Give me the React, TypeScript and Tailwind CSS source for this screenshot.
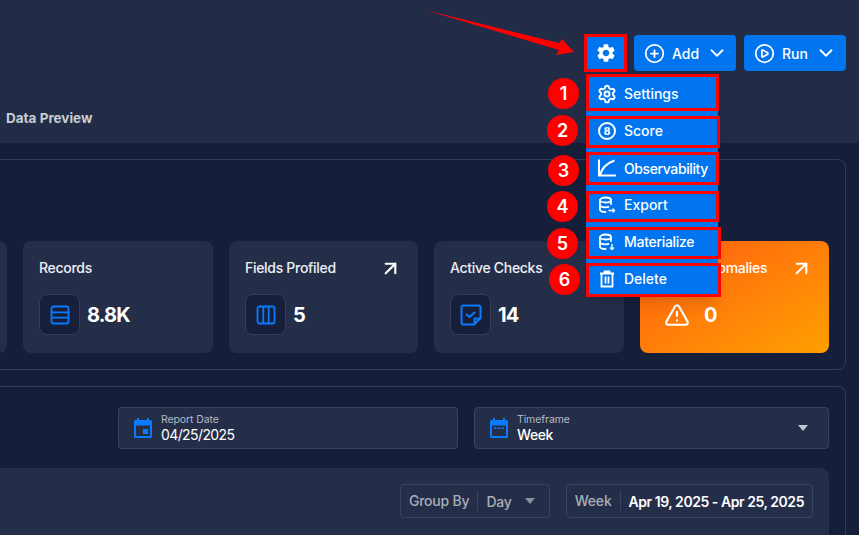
import { ArrowUpRight, ChevronDown, CirclePlay, CirclePlus, Settings, TriangleAlert } from 'lucide-react';

const menuItems = [
  { n: 1, label: 'Settings', icon: 'settings', box: 'mt-0 h-[37px] w-[133px] pt-[2px]', badge: '-left-[41px] top-[1px]', text: '' },
  { n: 2, label: 'Score', icon: 'score', box: 'mt-[5px] h-[32px] w-[134px] pb-[3px]', badge: '-left-[42px] top-[-4px]', text: '' },
  { n: 3, label: 'Observability', icon: 'chart', box: 'mt-[4px] h-[33px] w-[133px] pb-[1px]', badge: '-left-[41px] top-0', text: 'tracking-[-0.4px]' },
  { n: 4, label: 'Export', icon: 'export', box: 'mt-[6px] h-[31px] w-[133px] pb-[4px]', badge: '-left-[42px] top-[-3px]', text: '' },
  { n: 5, label: 'Materialize', icon: 'materialize', box: 'mt-[5px] h-[32px] w-[135px] pb-[3px]', badge: '-left-[42px] top-[-2px]', text: 'tracking-[-0.3px]' },
  { n: 6, label: 'Delete', icon: 'delete', box: 'mt-[4px] h-[34px] w-[135px] pb-[3px]', badge: '-left-[40px] top-[-2px]', text: '' },
];

function GearFilled() {
  return (
    <svg viewBox="0 0 24 24" className="h-[22px] w-[22px] fill-white">
      <path d="M19.14 12.94c.04-.3.06-.61.06-.94 0-.32-.02-.64-.07-.94l2.03-1.58c.18-.14.23-.41.12-.61l-1.92-3.32c-.12-.22-.37-.29-.59-.22l-2.39.96c-.5-.38-1.03-.7-1.62-.94l-.36-2.54c-.04-.24-.24-.41-.48-.41h-3.84c-.24 0-.43.17-.47.41l-.36 2.54c-.59.24-1.13.57-1.62.94l-2.39-.96c-.22-.08-.47 0-.59.22L2.74 8.87c-.12.21-.08.47.12.61l2.03 1.58c-.05.3-.09.63-.09.94s.02.64.07.94l-2.03 1.58c-.18.14-.23.41-.12.61l1.92 3.32c.12.22.37.29.59.22l2.39-.96c.5.38 1.03.7 1.62.94l.36 2.54c.05.24.24.41.48.41h3.84c.24 0 .44-.17.47-.41l.36-2.54c.59-.24 1.13-.56 1.62-.94l2.39.96c.22.08.47 0 .59-.22l1.92-3.32c.12-.22.07-.47-.12-.61l-2.01-1.58zM12 15.6c-1.98 0-3.6-1.62-3.6-3.6s1.62-3.6 3.6-3.6 3.6 1.62 3.6 3.6-1.62 3.6-3.6 3.6z" />
    </svg>
  );
}

function Db({ mark }: { mark: 'right' | 'down' }) {
  return (
    <svg viewBox="0 0 18 18" fill="none" stroke="white" strokeWidth="1.8" strokeLinecap="round" className="h-[18px] w-[18px]">
      <ellipse cx="7.500" cy="4" rx="5.500" ry="2.500" />
      <path d="M2 4v9.500C2 15 4.500 16 7.500 16M13 4v4M2 8.800c0 1.500 2.500 2.500 5.500 2.500 1 0 2-.1 3-.4" />
      {mark === 'right' ? (
        <path d="M11 14.500h5.500M15 13l1.500 1.500L15 16" strokeWidth="1.400" />
      ) : (
        <path d="M14 11.500v5M12.500 15l1.500 1.500 1.500-1.500" strokeWidth="1.400" />
      )}
    </svg>
  );
}

function MenuIcon({ name }: { name: string }) {
  if (name === 'settings') return <Settings size={20} color="white" strokeWidth={2.3} className="-mx-px" />;
  if (name === 'score')
    return (
      <span className="flex h-[18px] w-[18px] items-center justify-center rounded-full border-2 border-white text-[10px] font-extrabold leading-none text-white">
        8
      </span>
    );
  if (name === 'chart')
    return (
      <svg viewBox="0 0 18 18" fill="none" stroke="white" strokeWidth="2" className="h-[18px] w-[18px] shrink-0">
        <path d="M1 .500V16.500H18M2 16.500C3.500 10 8 4.500 16.500 1.500" />
      </svg>
    );
  if (name === 'export') return <Db mark="right" />;
  if (name === 'materialize') return <Db mark="down" />;
  return (
    <svg viewBox="0 0 18 18" fill="none" stroke="white" strokeWidth="1.800" className="h-[18px] w-[18px]">
      <path d="M2 3.500h14M6.500 3V1.500h5V3M3.500 3.500V16.500h11V3.500M7.500 6.500v7M10.500 6.500v7" />
    </svg>
  );
}

function Calendar({ dots }: { dots?: boolean }) {
  return (
    <svg viewBox="0 0 22 22" className="h-[22px] w-[22px] fill-[#0a7bff]">
      <path fillRule="evenodd" d="M5 1h2v2h8V1h2v2h1.500A1.500 1.500 0 0 1 20 4.500v15a1.500 1.500 0 0 1-1.500 1.500h-15A1.500 1.500 0 0 1 2 19.500v-15A1.500 1.500 0 0 1 3.500 3H5zM4 8.500V19h14V8.500z" />
      {dots ? <path d="M6 10.500h2.500v1.500H6zM9.800 10.500h2.500v1.500H9.800zM13.500 10.500H16v1.500h-2.500z" /> : <path d="M11 12h5v5h-5z" />}
    </svg>
  );
}

function StatCard({ title, value, arrow, width, children }: { title: string; value: string; arrow?: boolean; width: string; children: React.ReactNode }) {
  return (
    <div className={`h-[112px] shrink-0 rounded-lg bg-[#252e49] px-4 pt-[17px] ${width}`}>
      <div className="flex h-[19px] items-center justify-between text-[14px] font-medium tracking-[-0.3px] text-[#eef0f5]">
        <span>{title}</span>
        {arrow && <ArrowUpRight size={23} color="white" strokeWidth={2.2} className="translate-y-px" />}
      </div>
      <div className="mt-[17px] flex items-center gap-[7px]">
        <div className="flex h-[41px] w-[41px] items-center justify-center rounded-lg border border-[#333c58] bg-[#171f3a]">
          {children}
        </div>
        <span className="text-[20px] font-bold tracking-[-0.8px] text-white">{value}</span>
      </div>
    </div>
  );
}

export default function App() {
  return (
    <div className="relative h-[535px] w-[859px] overflow-hidden bg-[#161f3a] font-['Inter',sans-serif]">
      {/* Header */}
      <header className="flex h-[143px] flex-col bg-[#232c47] pl-[6px] pr-[13px]">
        <div className="mt-[34px] flex items-start justify-end gap-2">
          <button className="-mr-px flex h-[38px] w-[43px] items-center justify-center border-[3px] border-[#f00] bg-[#0075ef]">
            <GearFilled />
          </button>
          <button className="mt-px flex h-[36px] w-[102px] items-center gap-[7px] rounded bg-[#0075ef] pl-[10px] text-[14px] font-medium text-white">
            <CirclePlus size={21} strokeWidth={2} />
            <span>Add</span>
            <ChevronDown size={22} strokeWidth={2} />
          </button>
          <button className="mt-px flex h-[36px] w-[102px] items-center gap-[7px] rounded bg-[#0075ef] pl-[10px] text-[14px] font-medium text-white">
            <CirclePlay size={21} strokeWidth={2} />
            <span>Run</span>
            <ChevronDown size={22} strokeWidth={2} />
          </button>
        </div>
        <div className="mt-[36px] text-[13.500px] font-bold text-[#c9ccd4]">Data Preview</div>
      </header>

      {/* Totals panel */}
      <section className="-ml-[20px] mr-[13px] mt-4 h-[211px] rounded-lg border border-[#333c58] pt-[81px]">
        <div className="-ml-[164px] flex gap-4">
          <div className="h-[112px] w-[190px] shrink-0 rounded-lg bg-[#252e49]" />
          <StatCard title="Records" value="8.8K" width="w-[190px]">
            <svg viewBox="0 0 20 20" fill="none" stroke="#0a7bff" strokeWidth="1.800" className="h-[20px] w-[20px]">
              <rect x="1.500" y="1.500" width="17" height="17" rx="2" />
              <path d="M1.500 7.300h17M1.500 12.700h17" />
            </svg>
          </StatCard>
          <StatCard title="Fields Profiled" value="5" arrow width="w-[189px]">
            <svg viewBox="0 0 20 20" fill="none" stroke="#0a7bff" strokeWidth="1.800" className="h-[20px] w-[20px]">
              <rect x="1.500" y="1.500" width="17" height="17" rx="2" />
              <path d="M7.300 1.500v17M12.700 1.500v17" />
            </svg>
          </StatCard>
          <StatCard title="Active Checks" value="14" width="w-[190px]">
            <svg viewBox="0 0 22 22" fill="none" stroke="#0a7bff" strokeWidth="2" strokeLinejoin="round" strokeLinecap="round" className="h-[22px] w-[22px]">
              <path d="M3.500 1.500h15a2 2 0 0 1 2 2V14l-6.500 6.500H3.500a2 2 0 0 1-2-2v-15a2 2 0 0 1 2-2z" />
              <path d="M6.500 10.500l3 2.500 5-4.500M14.500 20v-5.500h5.500" />
            </svg>
          </StatCard>
          <div className="h-[112px] w-[189px] shrink-0 rounded-lg bg-gradient-to-br from-[#ff5a0f] to-[#ff9f00] px-4 pt-[17px]">
            <div className="flex h-[19px] items-center justify-between text-[14px] font-medium tracking-[-0.3px] text-white">
              <span className="whitespace-nowrap">Active Anomalies</span>
              <ArrowUpRight size={23} color="white" strokeWidth={2.2} className="translate-y-px" />
            </div>
            <div className="ml-2 mt-[23px] flex items-center gap-[14px]">
              <TriangleAlert size={26} color="white" strokeWidth={2} />
              <span className="text-[20px] font-bold text-white">0</span>
            </div>
          </div>
        </div>
      </section>

      {/* Insights panel */}
      <section className="-ml-[20px] mr-[13px] mt-4 h-[200px] rounded-lg border border-[#333c58] pt-5">
        <div className="flex justify-end gap-4 pr-4">
          <div className="flex h-[42px] w-[340px] items-center gap-[7px] rounded border border-[#3a435e] bg-[#252e49] pl-[13px]">
            <Calendar />
            <div className="flex flex-col pt-px leading-none">
              <span className="text-[10.500px] tracking-[-0.1px] text-[#b4b8c3]">Report Date</span>
              <span className="mt-[2px] text-[14px] tracking-[-0.6px] text-white">04/25/2025</span>
            </div>
          </div>
          <div className="flex h-[42px] w-[355px] items-center gap-[7px] rounded border border-[#3a435e] bg-[#252e49] pl-[13px] pr-5">
            <Calendar dots />
            <div className="flex flex-1 flex-col pt-px leading-none">
              <span className="text-[10.500px] tracking-[-0.1px] text-[#b4b8c3]">Timeframe</span>
              <span className="mt-[2px] text-[14px] font-medium tracking-[-0.4px] text-white">Week</span>
            </div>
            <span className="h-0 w-0 border-x-[5.500px] border-t-[6px] border-x-transparent border-t-[#c4c7cf]" />
          </div>
        </div>
        <div className="mr-4 mt-[19px] flex h-[120px] justify-end gap-4 rounded-lg bg-[#252e49] pr-4 pt-4">
          <div className="flex h-[34px] items-center rounded border border-[#3a435e] text-[14px] font-medium tracking-[-0.2px] text-[#a9adb8]">
            <span className="border-r border-[#3a435e] pl-2 pr-2 leading-[20px]">Group By</span>
            <span className="pl-2">Day</span>
            <span className="ml-[13px] mr-[14px] h-0 w-0 border-x-[5.500px] border-t-[6px] border-x-transparent border-t-[#8d919d]" />
          </div>
          <div className="flex h-[34px] items-center rounded border border-[#3a435e] text-[14px] font-medium">
            <span className="border-r border-[#3a435e] pl-2 pr-2 leading-[20px] tracking-[-0.2px] text-[#a9adb8]">Week</span>
            <span className="pl-2 pr-2 font-semibold tracking-[-0.45px] text-white">Apr 19, 2025 - Apr 25, 2025</span>
          </div>
        </div>
      </section>

      {/* Annotated settings menu */}
      <div className="absolute left-[586px] top-[74px] flex w-[132px] flex-col bg-[#0075ef] shadow-lg">
        {menuItems.map((item) => (
          <div key={item.n} className={`relative flex shrink-0 items-center gap-2 border-[3px] border-[#f00] pl-[9px] text-[14px] font-medium text-white ${item.box}`}>
            <MenuIcon name={item.icon} />
            <span className={item.text}>{item.label}</span>
            <span className={`absolute flex h-[31px] w-[31px] items-center justify-center rounded-full bg-[#f00] text-[18px] font-semibold text-white ${item.badge}`}>
              {item.n}
            </span>
          </div>
        ))}
      </div>

      {/* Callout arrow */}
      <svg viewBox="0 0 160 60" className="absolute left-[425px] top-[8px] h-[60px] w-[160px] fill-[#f00]">
        <path d="M0 2L134 35L137 31L149 44L131 47L134 42Z" />
      </svg>
    </div>
  );
}
